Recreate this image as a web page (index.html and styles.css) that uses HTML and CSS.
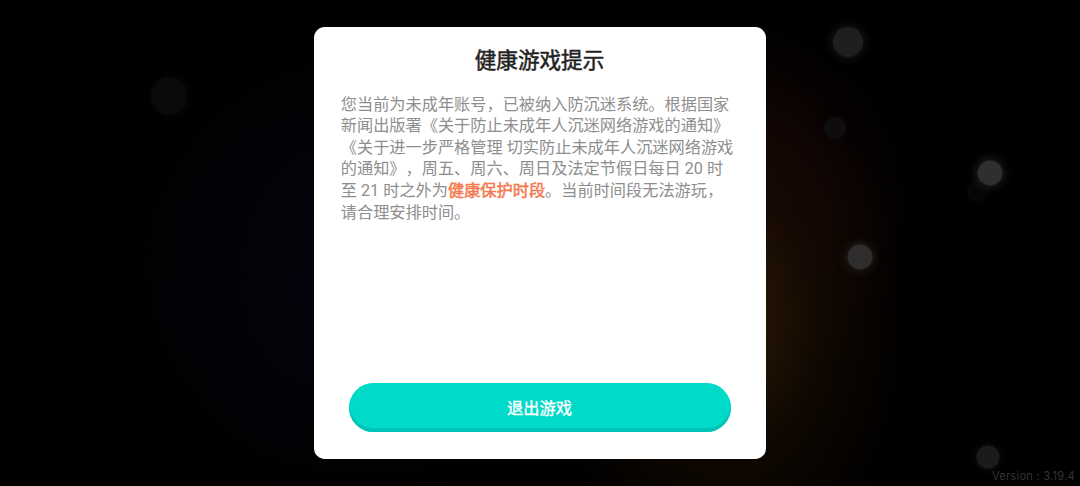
FILE: index.html
```
<!DOCTYPE html>
<html lang="zh-CN">
<head>
    <meta charset="UTF-8">
    <meta name="viewport" content="width=device-width, initial-scale=1.0">
    <title>健康游戏提示</title>
    <link rel="stylesheet" href="styles.css">
</head>
<body>
    <!-- Floating lights in the background -->
    <div class="lights">
        <span class="light light-1"></span>
        <span class="light light-2"></span>
        <span class="light light-3"></span>
        <span class="light light-4"></span>
        <span class="light light-5"></span>
        <span class="light light-6"></span>
        <span class="light light-7"></span>
    </div>

    <div class="dialog">
        <h1>健康游戏提示</h1>
        <p class="message">
            您当前为未成年账号，已被纳入防沉迷系统。根据国家<br>新闻出版署《关于防止未成年人沉迷网络游戏的通知》<br>《关于进一步严格管理 切实防止未成年人沉迷网络游戏<br>的通知》，周五、周六、周日及法定节假日每日 20 时<br>至 21 时之外为<strong>健康保护时段</strong>。当前时间段无法游玩，<br>请合理安排时间。
        </p>
        <button type="button" class="exit-button">退出游戏</button>
    </div>

    <div class="version">Version : 3.19.4</div>
</body>
</html>
```

FILE: styles.css
```
* {
    box-sizing: border-box;
}

body {
    position: relative;
    display: flex;
    justify-content: center;
    align-items: center;
    height: 100vh;
    margin: 0;
    overflow: hidden;
    font-family: "Noto Sans CJK SC", sans-serif;
    background:
        radial-gradient(ellipse 180px 260px at 730px 325px, #2b1b04 0%, rgba(25, 12, 2, 0.6) 50%, transparent 100%),
        radial-gradient(ellipse 190px 190px at 725px 200px, #190505 0%, transparent 100%),
        radial-gradient(ellipse 220px 240px at 330px 290px, #02040b 0%, transparent 100%),
        radial-gradient(ellipse 400px 260px at 520px 240px, #05060a 0%, transparent 100%),
        #000;
}

.light {
    position: absolute;
    width: 25px;
    height: 25px;
    border-radius: 50%;
    transform: translate(-50%, -50%);
}

.light-1 {
    left: 169px;
    top: 96px;
    width: 37px;
    height: 37px;
    background-color: #090b0b;
    box-shadow: 0 0 9px 1px #050808;
}

.light-2 {
    left: 848px;
    top: 42px;
    width: 30px;
    height: 30px;
    background-color: #1f1f21;
    box-shadow: 0 0 8px 2px #141518;
}

.light-3 {
    left: 835px;
    top: 128px;
    width: 22px;
    height: 22px;
    background-color: #0e0c0d;
    box-shadow: 0 0 6px 1px #080607;
}

.light-4 {
    left: 978px;
    top: 191px;
    width: 22px;
    height: 22px;
    background-color: #050606;
    box-shadow: 0 0 5px 1px #030404;
}

.light-5 {
    left: 990px;
    top: 172.5px;
    background-color: #2f2f2f;
    box-shadow: 0 0 8px 2px #1c2020;
}

.light-6 {
    left: 860px;
    top: 257px;
    background-color: #302e2d;
    box-shadow: 0 0 8px 2px #1e1c1b;
}

.light-7 {
    left: 988px;
    top: 457px;
    width: 23px;
    height: 23px;
    background-color: #1b1b1b;
    box-shadow: 0 0 8px 1px #101010;
}

.dialog {
    position: relative;
    display: flex;
    flex-direction: column;
    width: 452.4px;
    height: 432px;
    padding: 16px 27px 27px;
    border-radius: 10.8px;
    background-color: #fff;
}

.dialog h1 {
    margin: 0 1px 0 0;
    font-size: 21.6px;
    line-height: 32px;
    font-weight: 400;
    text-align: center;
    color: #222;
    -webkit-text-stroke: 0.5px #222;
}

.message {
    margin: 18.7px 0 0;
    font-family: Roboto, "Noto Sans CJK SC", sans-serif;
    font-size: 16.2px;
    line-height: 21.6px;
    white-space: nowrap;
    text-spacing-trim: space-all;
    color: #8e8e8e;
}

.message strong {
    font-weight: 400;
    color: #f4794f;
    -webkit-text-stroke: 0.5px #f4794f;
}

.exit-button {
    height: 49px;
    margin: auto 8px 0;
    padding: 0 1px 1px 0;
    border: none;
    border-radius: 24.5px;
    font-family: inherit;
    font-size: 16.2px;
    font-weight: 400;
    color: #fff;
    background-color: #00dac9;
    box-shadow: inset 0 -4px 0 #00c4b5;
    -webkit-text-stroke: 0.4px #fff;
}

.version {
    position: absolute;
    right: 5px;
    bottom: 2px;
    font-family: Inter, sans-serif;
    font-size: 11.2px;
    line-height: 16px;
    letter-spacing: 0.2px;
    color: #343434;
}
```
